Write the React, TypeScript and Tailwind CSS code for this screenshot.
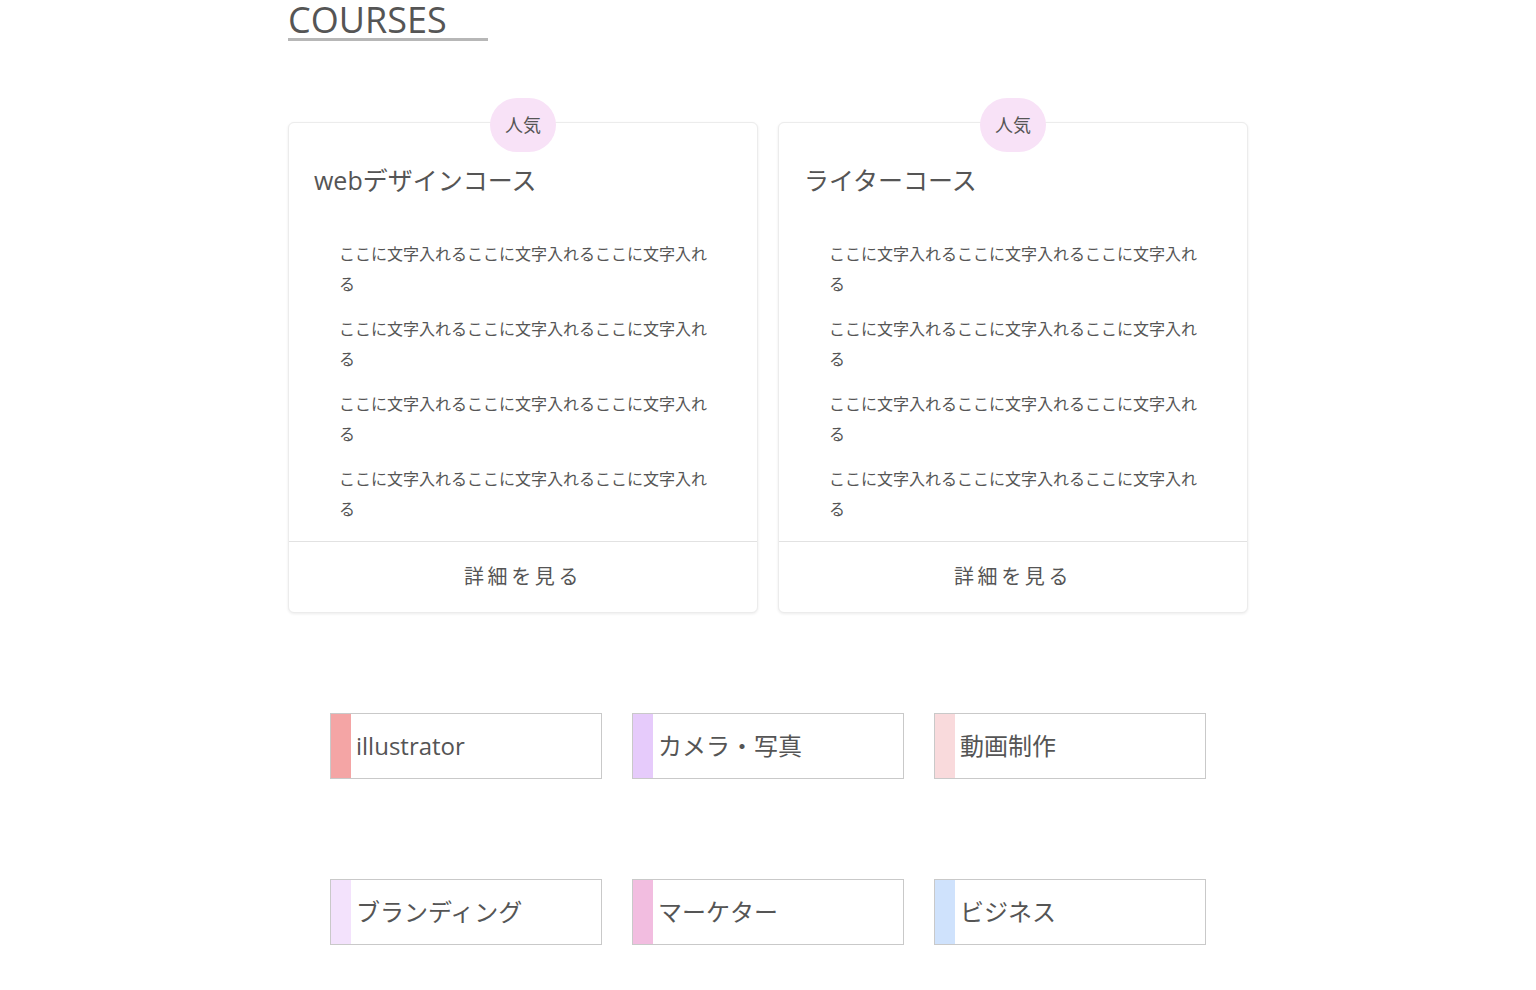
import React from 'react';

const jp = { fontFamily: '"Open Sans", "Noto Sans CJK JP", sans-serif' };

const items = [
    'ここに文字入れるここに文字入れるここに文字入れる',
    'ここに文字入れるここに文字入れるここに文字入れる',
    'ここに文字入れるここに文字入れるここに文字入れる',
    'ここに文字入れるここに文字入れるここに文字入れる',
];

const courses = ['webデザインコース', 'ライターコース'];

const categories = [
    { name: 'illustrator', bar: 'bg-[#f4a5a5]' },
    { name: 'カメラ・写真', bar: 'bg-[#e6cbfb]' },
    { name: '動画制作', bar: 'bg-[#f9dadc]' },
    { name: 'ブランディング', bar: 'bg-[#f3e2fc]' },
    { name: 'マーケター', bar: 'bg-[#f2bde0]' },
    { name: 'ビジネス', bar: 'bg-[#cfe2fc]' },
];

const CourseCard = ({ title }: { title: string }) => (
    <div className="relative flex flex-col rounded-md border border-[#ececec] bg-white shadow-[0_1px_3px_rgba(0,0,0,0.08)]">
        <div className="absolute -top-[25px] left-1/2 flex h-[54px] w-[66px] -translate-x-1/2 items-center justify-center rounded-full bg-[#f8e2f7] text-[18px] text-[#555]">
            人気
        </div>
        <h3 className="mt-[45px] px-[25px] text-[25px] leading-none text-[#555]">{title}</h3>
        <ul className="mt-[46px] w-[425px] pl-[50px] pb-[2px]">
            {items.map((t, i) => (
                <li key={i} className="mb-[15px] text-[16px] leading-[30px] text-[#555]">
                    {t}
                </li>
            ))}
        </ul>
        <div className="border-t border-[#e2e2e2] py-[21px] text-center text-[20px] leading-[28px] tracking-[0.18em] text-[#555]">
            詳細を見る
        </div>
    </div>
);

const App = () => {
    return (
        <div className="min-h-[990px] w-full bg-white" style={jp}>
            <div className="mx-auto w-[960px]">
                <h2 className="inline-block w-[200px] border-b-[3px] border-[#b7b7b7] pt-[1px] text-[36px] leading-[37px] text-[#555]">
                    COURSES
                </h2>
                <div className="mt-[81px] grid grid-cols-2 gap-[20px]">
                    {courses.map((c) => (
                        <CourseCard key={c} title={c} />
                    ))}
                </div>
            </div>
            <div className="mx-auto mt-[100px] grid w-[876px] grid-cols-3 gap-x-[30px] gap-y-[100px] pb-[45px]">
                {categories.map((c) => (
                    <div key={c.name} className="flex h-[66px] border border-[#c9c9c9] bg-white">
                        <div className={`w-[20px] ${c.bar}`} />
                        <div className="flex items-center pl-[5px] text-[24px] text-[#555]">{c.name}</div>
                    </div>
                ))}
            </div>
        </div>
    );
};

export default App;
